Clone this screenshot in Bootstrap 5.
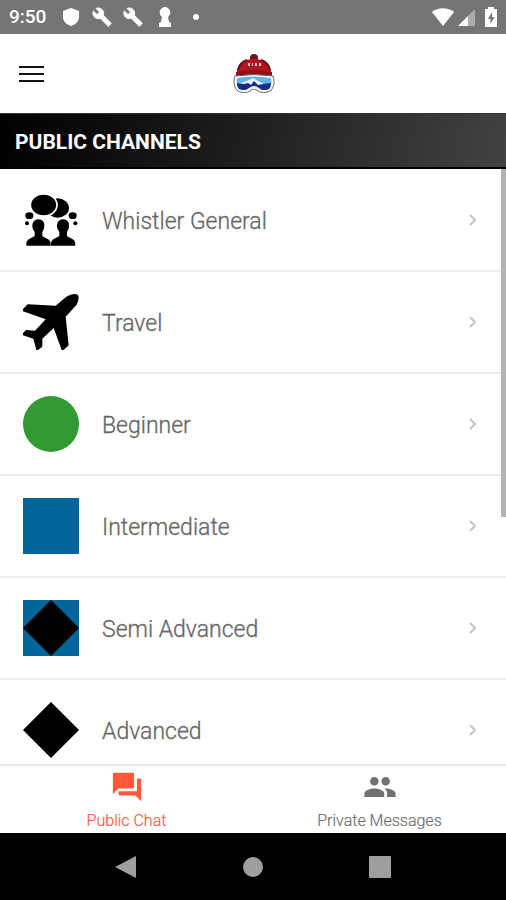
<!DOCTYPE html>
<html lang="en">
<head>
<meta charset="utf-8">
<meta name="viewport" content="width=device-width, initial-scale=1">
<title>Public Channels</title>
<link href="https://cdn.jsdelivr.net/npm/bootstrap@5.3.0/dist/css/bootstrap.min.css" rel="stylesheet">
<style>
body{font-family:Roboto,"Liberation Sans",sans-serif;color:#666;background:#fff}
svg{display:block;flex:none}
.status-bar{height:34px;background:#757575;color:#fff;font-size:19px;font-weight:500;padding:0 8px 0 9px}
.status-icons{gap:11px}
.app-header{height:79px;padding:0 17px}
.side{width:26px}
.band{height:56px;padding:2px 15px 0;background:linear-gradient(100deg,#000,#1c1c1c 45%,#424242);border-top:1px solid #333;border-bottom:2px solid #000}
.band h1{font-size:21px;font-weight:700;line-height:24px;color:#fff}
.channels{min-height:0;padding-top:1px}
.channel{height:102px;padding:0 26px 0 23px;gap:23px;border-bottom:2px solid #ededed;color:#666;font-size:23px;font-weight:300;line-height:28px;-webkit-text-stroke:.3px #666}
.channel span{padding-top:4px}
.scroll-thumb{top:0;right:0;width:5px;height:348px;background:#b3b3b3}
.tabs{border-top:2px solid #e8e8e8;height:69px}
.tab{color:#707070;font-size:16px;line-height:20px;font-weight:300;padding-top:4px;gap:7px;-webkit-text-stroke:.2px}
.tab.active{color:#ff5a3c}
.sys-nav{height:67px;background:#000}
.sys-nav button{width:127px}
</style>
<script src="https://cdn.jsdelivr.net/npm/bootstrap@5.3.0/dist/js/bootstrap.bundle.min.js"></script>
</head>
<body>
<div class="vh-100 d-flex flex-column overflow-hidden">
  <div class="status-bar d-flex align-items-center justify-content-between flex-shrink-0">
    <div class="status-icons d-flex align-items-center">
      <span class="pe-1">9:50</span>
      <svg width="20" height="20" viewBox="0 0 20 20" fill="#fff"><path d="M10 1l8 3v6c0 4-3 7.500-8 9-5-1.500-8-5-8-9V4z"/></svg>
      <svg width="20" height="20" viewBox="0 0 24 24" fill="#fff" stroke="#fff"><path d="M22.700 19l-9.100-9.100c.9-2.300.4-5-1.500-6.900-2-2-5-2.400-7.400-1.300L9 6 6 9 1.600 4.700C.4 7.100.9 10.100 2.900 12.100c1.900 1.900 4.600 2.400 6.900 1.500l9.100 9.100c.4.4 1 .4 1.400 0l2.300-2.300c.5-.4.5-1.100.1-1.400z"/></svg>
      <svg width="20" height="20" viewBox="0 0 24 24" fill="#fff" stroke="#fff"><path d="M22.700 19l-9.100-9.100c.9-2.300.4-5-1.500-6.900-2-2-5-2.400-7.400-1.300L9 6 6 9 1.600 4.700C.4 7.100.9 10.100 2.900 12.100c1.900 1.900 4.600 2.400 6.900 1.500l9.100 9.100c.4.4 1 .4 1.400 0l2.300-2.300c.5-.4.5-1.100.1-1.400z"/></svg>
      <svg width="20" height="20" viewBox="0 0 20 20" fill="#fff"><path d="M11 0a5.500 5.500 0 0 1 4 9l-1 1 1 5 2 1v4H5v-4l2-1 1-5-1-1a5.500 5.500 0 0 1 4-9z"/></svg>
      <svg width="20" height="20" viewBox="0 0 20 20" fill="#fff"><circle cx="11" cy="10" r="3"/></svg>
    </div>
    <div class="d-flex align-items-center gap-1">
      <svg width="22" height="18" viewBox="0 0 22 18" fill="#fff"><path d="M11 18L0 4C6-1 16-1 22 4z"/></svg>
      <svg width="18" height="18" viewBox="0 0 18 18" fill="#fff"><path d="M0 18L17 1v17z" opacity=".4"/><path d="M0 18L10 8v10z"/></svg>
      <svg class="ms-1" width="14" height="20" viewBox="0 0 14 20"><path d="M4 0h6v2h3v18H1V2h3z" fill="#fff"/><path d="M8 5l-4 7h2.500v5l4-7H8z" fill="#757575"/></svg>
    </div>
  </div>
  <header class="app-header d-flex align-items-center justify-content-between flex-shrink-0">
    <button class="btn p-0 border-0" type="button" aria-label="Menu">
      <svg width="28" height="20" viewBox="0 0 28 20" fill="#111"><path d="M2 2h25v2H2zM2 9h25v2H2zM2 16h25v2H2z"/></svg>
    </button>
    <svg width="44" height="44" viewBox="0 0 44 44">
      <circle cx="22" cy="6" r="4" fill="#6b1420"/>
      <path d="M5 26C3 14 10 7 22 7s19 7 17 19z" fill="#b3151f"/>
      <path d="M4 20q18-4 36 0v6H4z" fill="#8c121b"/>
      <path d="M6 18q2-8 9-10M38 18q-2-8-9-10" stroke="#701018" stroke-width="2" fill="none"/>
      <path d="M16 11h2v3h-2zM20 11h1v3h-1zM23 11h2v3h-2zM27 11h2v3h-2z" fill="#efc9c9"/>
      <path d="M3 24q19-3 38 0c2 6 1 12-3 15-4 2-9 2-12 0q-4-4-8 0c-3 2-8 2-12 0-4-3-5-9-3-15z" fill="#fff" stroke="#6e5560" stroke-width="1"/>
      <path d="M5 26q17-3 34 0c1 5 0 8-2 11-4 2-8 1-10-1q-5-4-10 0c-2 2-6 3-10 1-2-3-3-6-2-11z" fill="#62b5e8"/>
      <path d="M5 32l7-2 9-4 5 3 6 3 7 1-2 4H7z" fill="#e8f2fa"/>
      <path d="M5 31l7 1 4-1 3 2 3-4 4 4 5-1 8-1c0 3-1 5-2 6-4 2-8 1-10-1q-5-4-10 0c-2 2-6 3-10 1-1-1-2-3-2-6z" fill="#162e80"/>
    </svg>
    <div class="side"></div>
  </header>
  <div class="band d-flex align-items-center flex-shrink-0"><h1 class="m-0">PUBLIC CHANNELS</h1></div>
  <main class="channels flex-grow-1 position-relative overflow-hidden">
    <a href="#general" class="channel d-flex align-items-center text-decoration-none">
      <svg width="56" height="56" viewBox="0 0 168 168"><ellipse cx="104" cy="48" rx="34" ry="29"/><ellipse cx="62" cy="39" rx="40" ry="33" stroke="#fff" stroke-width="5"/><ellipse cx="19" cy="71" rx="12" ry="10"/><ellipse cx="149" cy="71" rx="12" ry="10"/><circle cx="12" cy="94" r="6"/><circle cx="157" cy="94" r="6"/><path id="person" d="M46 82c13 0 19 9 18 20 0 8-3 13-6 17v12c2 6 25 7 25 24v6H10v-6c0-17 22-18 25-24v-12c-4-4-7-9-7-17 0-11 6-20 18-20z"/><use href="#person" x="74"/></svg>
      <span class="flex-grow-1">Whistler General</span>
      <svg width="14" height="14" viewBox="0 0 14 14" fill="none" stroke="#c4c4c4" stroke-width="2"><path d="M4 2l5 5-5 5"/></svg>
    </a>
    <a href="#travel" class="channel d-flex align-items-center text-decoration-none">
      <svg width="56" height="56" viewBox="0 0 168 168"><path d="M98 35L130 8Q150-4 164 2Q171 12 161 32L128 68L137 154L122 168H116L92 102L58 134V158L45 168H40L31 134L0 124V117L9 108L36 110L68 76L0 52V45L14 31Z"/></svg>
      <span class="flex-grow-1">Travel</span>
      <svg width="14" height="14" viewBox="0 0 14 14" fill="none" stroke="#c4c4c4" stroke-width="2"><path d="M4 2l5 5-5 5"/></svg>
    </a>
    <a href="#beginner" class="channel d-flex align-items-center text-decoration-none">
      <svg width="56" height="56" viewBox="0 0 56 56"><circle cx="28" cy="28" r="28" fill="#339933"/></svg>
      <span class="flex-grow-1">Beginner</span>
      <svg width="14" height="14" viewBox="0 0 14 14" fill="none" stroke="#c4c4c4" stroke-width="2"><path d="M4 2l5 5-5 5"/></svg>
    </a>
    <a href="#intermediate" class="channel d-flex align-items-center text-decoration-none">
      <svg width="56" height="56" viewBox="0 0 56 56"><path d="M0 0h56v56H0z" fill="#006699"/></svg>
      <span class="flex-grow-1">Intermediate</span>
      <svg width="14" height="14" viewBox="0 0 14 14" fill="none" stroke="#c4c4c4" stroke-width="2"><path d="M4 2l5 5-5 5"/></svg>
    </a>
    <a href="#semi-advanced" class="channel d-flex align-items-center text-decoration-none">
      <svg width="56" height="56" viewBox="0 0 56 56"><path d="M0 0h56v56H0z" fill="#006699"/><path d="M28 0l28 28-28 28L0 28z"/></svg>
      <span class="flex-grow-1">Semi Advanced</span>
      <svg width="14" height="14" viewBox="0 0 14 14" fill="none" stroke="#c4c4c4" stroke-width="2"><path d="M4 2l5 5-5 5"/></svg>
    </a>
    <a href="#advanced" class="channel d-flex align-items-center text-decoration-none">
      <svg width="56" height="56" viewBox="0 0 56 56"><path d="M28 0l28 28-28 28L0 28z"/></svg>
      <span class="flex-grow-1">Advanced</span>
      <svg width="14" height="14" viewBox="0 0 14 14" fill="none" stroke="#c4c4c4" stroke-width="2"><path d="M4 2l5 5-5 5"/></svg>
    </a>
    <div class="scroll-thumb position-absolute"></div>
  </main>
  <nav class="tabs d-flex flex-shrink-0">
    <a href="#public" class="tab active w-50 d-flex flex-column align-items-center text-decoration-none">
      <svg width="34" height="34" viewBox="0 0 24 24" fill="currentColor"><path d="M21 6h-2v9H6v2c0 .55.45 1 1 1h11l4 4V7c0-.55-.45-1-1-1zm-4 6V3c0-.55-.45-1-1-1H3c-.55 0-1 .45-1 1v14l4-4h10c.55 0 1-.45 1-1z"/></svg>
      <span>Public Chat</span>
    </a>
    <a href="#private" class="tab w-50 d-flex flex-column align-items-center text-decoration-none">
      <svg width="34" height="34" viewBox="0 0 24 24" fill="currentColor"><path d="M16 11c1.660 0 2.990-1.340 2.990-3S17.660 5 16 5s-3 1.340-3 3 1.340 3 3 3zm-8 0c1.660 0 2.990-1.340 2.990-3S9.660 5 8 5 5 6.340 5 8s1.340 3 3 3zm0 2c-2.330 0-7 1.170-7 3.500V19h14v-2.500c0-2.330-4.670-3.500-7-3.500zm8 0c-.29 0-.62.02-.97.05 1.160.84 1.970 1.970 1.970 3.450V19h6v-2.500c0-2.330-4.670-3.500-7-3.500z"/></svg>
      <span>Private Messages</span>
    </a>
  </nav>
  <div class="sys-nav d-flex justify-content-center flex-shrink-0">
    <button type="button" aria-label="Back" class="btn p-0 border-0 rounded-0 d-flex align-items-center justify-content-center"><svg width="24" height="24" viewBox="0 0 24 24" fill="#9e9e9e"><path d="M22 1v22L1 12z"/></svg></button>
    <button type="button" aria-label="Home" class="btn p-0 border-0 rounded-0 d-flex align-items-center justify-content-center"><svg width="24" height="24" viewBox="0 0 24 24" fill="#9e9e9e"><circle cx="12" cy="12" r="10"/></svg></button>
    <button type="button" aria-label="Overview" class="btn p-0 border-0 rounded-0 d-flex align-items-center justify-content-center"><svg width="24" height="24" viewBox="0 0 24 24" fill="#9e9e9e"><rect x="1" y="1" width="22" height="22" rx="1"/></svg></button>
  </div>
</div>
</body>
</html>
